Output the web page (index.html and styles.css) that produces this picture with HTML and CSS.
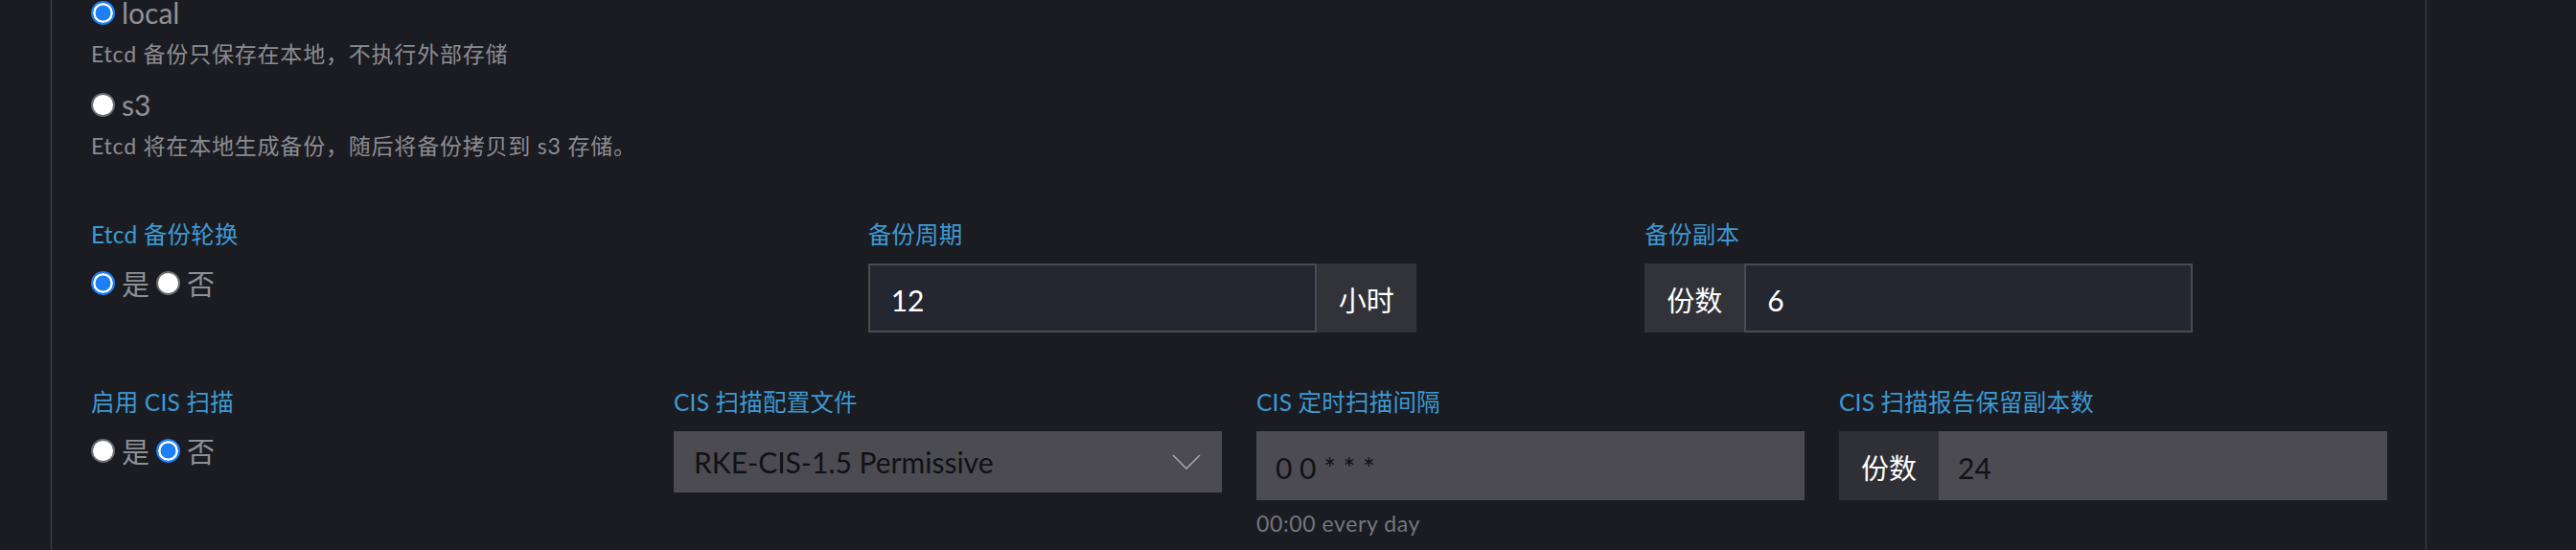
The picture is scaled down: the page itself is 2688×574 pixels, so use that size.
FILE: index.html
```html
<!DOCTYPE html>
<html lang="zh-CN">
<head>
<meta charset="utf-8">
<title>Etcd 与 CIS 扫描设置</title>
<link rel="stylesheet" href="styles.css">
</head>
<body>
<div class="panel">
  <div class="option first">
    <label class="radio-row">
      <span class="radio checked"></span>
      <span class="radio-text">local</span>
    </label>
    <div class="desc">Etcd 备份只保存在本地，不执行外部存储</div>
  </div>
  <div class="option">
    <label class="radio-row">
      <span class="radio"></span>
      <span class="radio-text">s3</span>
    </label>
    <div class="desc">Etcd 将在本地生成备份，随后将备份拷贝到 s3 存储。</div>
  </div>

  <div class="grid grid-3 row-a">
    <div class="field">
      <div class="label">Etcd 备份轮换</div>
      <div class="radio-group">
        <label class="radio-row"><span class="radio checked"></span><span class="radio-text cjk">是</span></label>
        <label class="radio-row"><span class="radio"></span><span class="radio-text cjk">否</span></label>
      </div>
    </div>
    <div class="field">
      <div class="label">备份周期</div>
      <div class="input-group">
        <div class="input">12</div>
        <div class="addon">小时</div>
      </div>
    </div>
    <div class="field">
      <div class="label">备份副本</div>
      <div class="input-group">
        <div class="addon">份数</div>
        <div class="input">6</div>
      </div>
    </div>
  </div>

  <div class="grid grid-4 row-b">
    <div class="field">
      <div class="label">启用 CIS 扫描</div>
      <div class="radio-group">
        <label class="radio-row"><span class="radio"></span><span class="radio-text cjk">是</span></label>
        <label class="radio-row"><span class="radio checked"></span><span class="radio-text cjk">否</span></label>
      </div>
    </div>
    <div class="field">
      <div class="label">CIS 扫描配置文件</div>
      <div class="select">
        <span class="select-text">RKE-CIS-1.5 Permissive</span>
        <svg class="chevron" width="30" height="16" viewBox="0 0 30 16"><polyline points="1,1 15,15 29,1" fill="none" stroke="#a3a6ab" stroke-width="1.6"/></svg>
      </div>
    </div>
    <div class="field">
      <div class="label">CIS 定时扫描间隔</div>
      <div class="input-group disabled">
        <div class="input">0 0 * * *</div>
      </div>
      <div class="hint">00:00 every day</div>
    </div>
    <div class="field">
      <div class="label">CIS 扫描报告保留副本数</div>
      <div class="input-group disabled">
        <div class="addon">份数</div>
        <div class="input">24</div>
      </div>
    </div>
  </div>
</div>
</body>
</html>
```

FILE: styles.css
```css
html, body {
  margin: 0;
  padding: 0;
  overflow: hidden;
  background: #1b1c21;
}

body {
  font-family: "Lato", "Noto Sans CJK SC", sans-serif;
  color: #8f9096;
}

.panel {
  box-sizing: border-box;
  width: 2479px;
  height: 620px;
  margin-left: 53px;
  margin-top: -7px;
  padding: 0 40px 0 41px;
  border-left: 1px solid #44454b;
  border-right: 1px solid #44454b;
}

.option + .option {
  margin-top: 16px;
}

.radio-row {
  display: flex;
  align-items: flex-start;
  gap: 7px;
  height: 40px;
}

.radio {
  box-sizing: border-box;
  flex: none;
  width: 25px;
  height: 25px;
  margin-top: 8px;
  border-radius: 50%;
  background: #ffffff;
  border: 2px solid #6d6e72;
}

.radio.checked {
  background: #1e7ef6;
  border-color: #1e7ef6;
  box-shadow: inset 0 0 0 2.5px #ffffff;
}

.radio-text {
  font-size: 30px;
  line-height: 40px;
  color: #8f9096;
}

.radio-text.cjk {
  font-size: 29px;
  padding-top: 2px;
}

.desc {
  margin-top: 7px;
  font-size: 23px;
  letter-spacing: 0.8px;
  line-height: 33px;
  color: #8b8c92;
}

.grid {
  display: grid;
  column-gap: 36px;
}

.grid-3 {
  grid-template-columns: repeat(3, 1fr);
}

.grid-4 {
  grid-template-columns: repeat(4, 1fr);
}

.row-a {
  margin-top: 58px;
}

.row-b {
  margin-top: 55px;
}

.label {
  font-size: 24.5px;
  letter-spacing: 0.2px;
  line-height: 36px;
  color: #3d98d3;
  margin-bottom: 12px;
}

.radio-group {
  display: flex;
  gap: 7px;
}

.input-group {
  display: flex;
  width: 572px;
  height: 72px;
}

.input {
  box-sizing: border-box;
  flex: 1;
  display: flex;
  align-items: center;
  padding: 3px 22px 0;
  background: #252730;
  border: 2px solid #4a4b52;
  color: #ffffff;
  font-size: 30px;
  line-height: 36px;
}

.addon {
  box-sizing: border-box;
  flex: none;
  width: 104px;
  display: flex;
  align-items: center;
  justify-content: center;
  padding-top: 6px;
  background: #323338;
  color: #ffffff;
  font-size: 29px;
  line-height: 36px;
}

.input-group.disabled .input {
  background: #4b4b51;
  border-color: #4b4b51;
  padding-left: 18px;
  color: #111114;
}

.input-group.disabled .addon {
  background: #2f3035;
}

.select {
  box-sizing: border-box;
  width: 572px;
  height: 64px;
  display: flex;
  align-items: center;
  justify-content: space-between;
  padding: 0 22px 0 21px;
  background: #4b4b51;
}

.select-text {
  font-size: 30px;
  line-height: 36px;
  color: #111114;
}

.chevron {
  display: block;
  flex: none;
}

.hint {
  margin-top: 8px;
  font-size: 23px;
  letter-spacing: 0.6px;
  line-height: 33px;
  color: #75767c;
}
```
